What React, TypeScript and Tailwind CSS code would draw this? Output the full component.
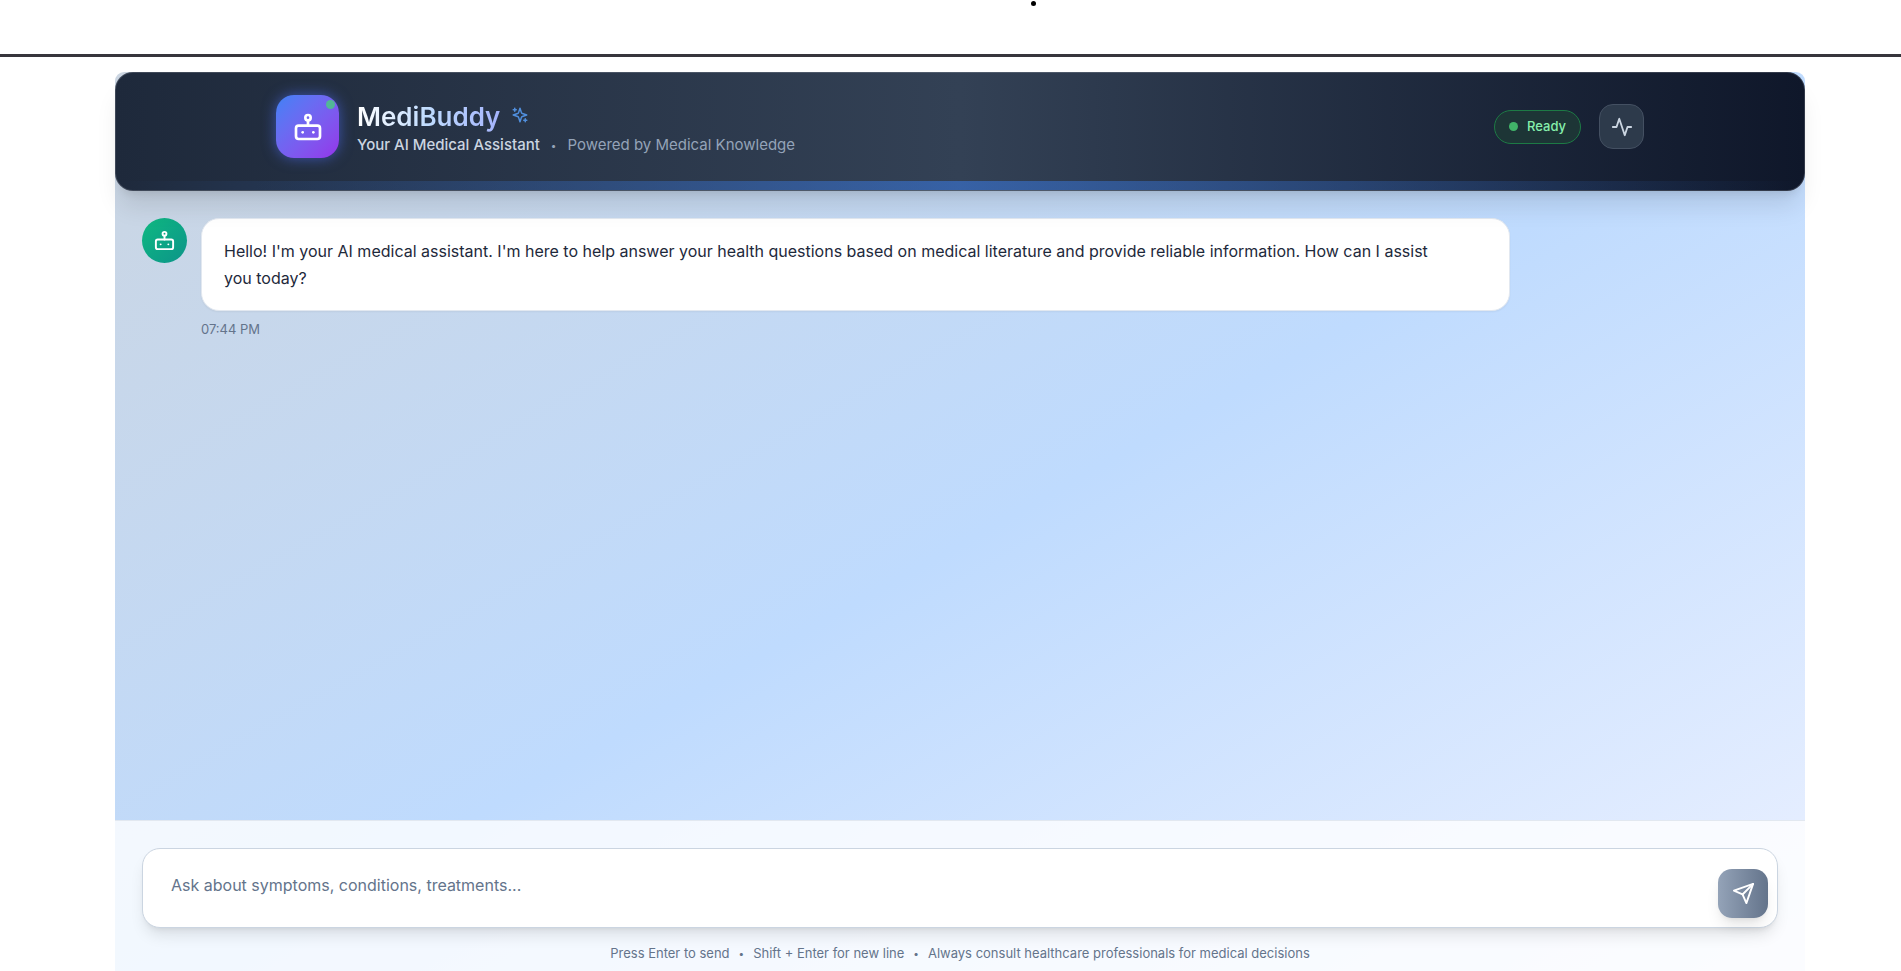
import type { SVGProps } from 'react';

function Icon({ children, ...props }: SVGProps<SVGSVGElement>) {
  return (
    <svg viewBox="0 0 24 24" fill="none" stroke="currentColor" strokeWidth="2" strokeLinecap="round" strokeLinejoin="round" aria-hidden="true" {...props}>
      {children}
    </svg>
  );
}

function BotIcon({ className }: { className: string }) {
  return (
    <Icon className={className}>
      <rect x="3" y="11" width="18" height="10" rx="2" />
      <circle cx="12" cy="5" r="2" />
      <path d="M12 7v4" />
      <path d="M8 16v0" />
      <path d="M16 16v0" />
    </Icon>
  );
}

function SendIcon({ className }: { className: string }) {
  return (
    <Icon className={className}>
      <path d="m22 2-7 20-4-9-9-4Z" />
      <path d="M22 2 11 13" />
    </Icon>
  );
}

function ActivityIcon({ className }: { className: string }) {
  return (
    <Icon className={className}>
      <path d="M22 12h-4l-3 9L9 3l-3 9H2" />
    </Icon>
  );
}

function SparklesIcon({ className }: { className: string }) {
  return (
    <Icon className={className}>
      <path d="m12 3-1.912 5.813a2 2 0 0 1-1.275 1.275L3 12l5.813 1.912a2 2 0 0 1 1.275 1.275L12 21l1.912-5.813a2 2 0 0 1 1.275-1.275L21 12l-5.813-1.912a2 2 0 0 1-1.275-1.275L12 3Z" />
      <path d="M5 3v4M3 5h4M19 17v4M17 19h4" />
    </Icon>
  );
}

function Header() {
  return (
    <header className="relative z-10 shrink-0 rounded-[18px] border border-white/15 bg-linear-to-r from-[#1e293b] via-[#334155] to-[#0f172a] bg-origin-border px-[18px] pt-[22px] pb-8 shadow-xl">
      <div className="absolute inset-x-0 bottom-0 h-[9px] rounded-b-[17px] bg-linear-to-r from-transparent via-[#3b82f6]/50 to-transparent" />
      <div className="mx-auto flex max-w-[1368px] items-center justify-between">
        <div className="flex items-center gap-[18px]">
          <div className="relative flex size-[63px] items-center justify-center rounded-[18px] bg-linear-to-br from-[#3b82f6] to-[#9333ea] text-white shadow-[0_0_14px_rgba(79,110,246,0.6)]">
            <BotIcon className="size-8" />
            <span className="absolute top-[5px] right-1 size-[9px] rounded-full bg-[#52b796]" />
          </div>
          <div className="pt-1">
            <div className="flex items-start gap-[11px]">
              <h1 className="bg-linear-to-r from-white via-[#bfdbfe] to-[#a5b4fc] bg-clip-text text-[26px] leading-8 font-semibold text-transparent">MediBuddy</h1>
              <SparklesIcon className="mt-[5px] size-[18px] text-[#508fdd]" />
            </div>
            <p className="flex items-center gap-[11px] text-[15px] leading-6 text-[#94a3b8]">
              <span className="font-medium text-[#cbd5e1]">Your AI Medical Assistant</span>
              <span className="text-[10px]">•</span>
              <span>Powered by Medical Knowledge</span>
            </p>
          </div>
        </div>
        <div className="flex items-center gap-[18px]">
          <div className="flex h-[34px] items-center gap-[9px] rounded-full border border-[#1d7a45] bg-[#1d3536] px-[14px] text-[13px] font-medium text-[#86efac]">
            <span className="size-[9px] rounded-full bg-[#41b469]" />
            Ready
          </div>
          <button type="button" aria-label="Activity" className="flex size-[45px] items-center justify-center rounded-[14px] border border-[#445062] bg-[#2d3a4b] text-[#cbd5e1]">
            <ActivityIcon className="size-[22px]" />
          </button>
        </div>
      </div>
    </header>
  );
}

export default function App() {
  return (
    <div className="flex h-screen flex-col overflow-hidden bg-white font-[Inter,sans-serif]">
      <div className="flex h-[54px] shrink-0 justify-center pt-px pl-[166px]">
        <span className="size-[5px] rounded-full bg-black" />
      </div>
      <hr className="h-[3px] shrink-0 border-0 bg-[#37353c]" />
      <div className="shrink-0 pt-[15px] pr-24 pl-[115px]">
        <div className="flex h-[calc(100vh-26px)] flex-col rounded-t-[9px] bg-linear-to-br from-[#cbd5e1] via-[#bfdbfe] to-[#eef2ff]">
          <Header />
          <main className="flex-1 p-[27px]">
            <div className="flex items-start gap-[14px]">
              <div className="flex size-[45px] shrink-0 items-center justify-center rounded-full bg-linear-to-br from-[#10b981] to-[#0d9488] text-white">
                <BotIcon className="size-[23px]" />
              </div>
              <div className="w-4/5">
                <div className="rounded-[18px] border border-[#e2e8f0] bg-white px-[22px] pt-[19px] pb-[18px] text-[16px] leading-[27px] text-[#1e293b] shadow-xs">
                  Hello! I'm your AI medical assistant. I'm here to help answer your health questions based on medical literature and provide reliable information. How can I assist
                  <br />
                  you today?
                </div>
                <time className="mt-[9px] block text-[13px] leading-[18px] text-[#64748b]">07:44 PM</time>
              </div>
            </div>
          </main>
          <footer className="shrink-0 border-t border-[#e2e8f0] bg-white/80 px-[27px] pt-[27px] pb-[54px]">
            <form className="flex items-end rounded-[18px] border border-[#cbd5e1] bg-white pr-[9px] pb-[9px] shadow-lg" onSubmit={(e) => e.preventDefault()}>
              <textarea
                aria-label="Message"
                rows={1}
                placeholder="Ask about symptoms, conditions, treatments..."
                className="h-[69px] flex-1 resize-none bg-transparent pt-[22px] pl-7 text-[16px] leading-[28px] text-[#1e293b] outline-none placeholder:text-[#64748b]"
              />
              <button type="submit" aria-label="Send" className="flex h-[49px] w-[50px] items-center justify-center rounded-[14px] bg-linear-to-r from-[#94a3b8] to-[#64748b] text-white shadow-lg">
                <SendIcon className="size-[23px]" />
              </button>
            </form>
            <p className="mt-[15px] flex items-center justify-center gap-[9px] text-[13px] leading-5 text-[#64748b]">
              <span>Press Enter to send</span>
              <span className="text-[10px]">•</span>
              <span>Shift + Enter for new line</span>
              <span className="text-[10px]">•</span>
              <span>Always consult healthcare professionals for medical decisions</span>
            </p>
          </footer>
        </div>
      </div>
    </div>
  );
}
